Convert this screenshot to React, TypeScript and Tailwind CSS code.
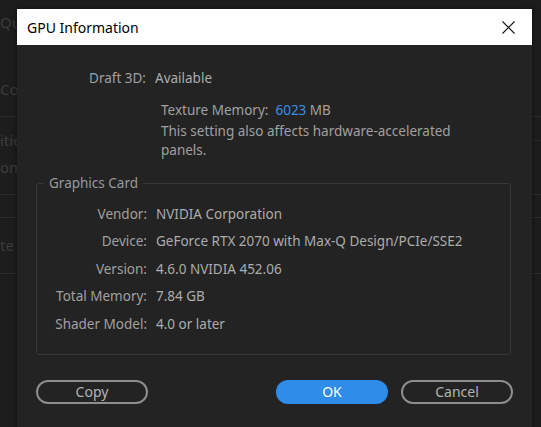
import React from 'react';

const font = { fontFamily: '"Noto Sans", "Liberation Sans", sans-serif' };

function InfoRow({ label, value }: { label: string; value: string }) {
  return (
    <div className="flex h-[27.5px] items-center">
      <span className="w-[110px] text-right text-[#a0a0a0]">{label}</span>
      <span className="ml-[9px] text-[#acacac]">{value}</span>
    </div>
  );
}

export default function App() {
  const card = [
    { label: 'Vendor:', value: 'NVIDIA Corporation' },
    { label: 'Device:', value: 'GeForce RTX 2070 with Max-Q Design/PCIe/SSE2' },
    { label: 'Version:', value: '4.6.0 NVIDIA 452.06' },
    { label: 'Total Memory:', value: '7.84 GB' },
    { label: 'Shader Model:', value: '4.0 or later' },
  ];

  return (
    <div className="relative h-[427px] w-[541px] overflow-hidden bg-[#1d1d1d]" style={font}>
      {/* app panels behind the dialog */}
      <div className="flex h-full flex-col text-[15px] text-[#3c3c3c]">
        <div className="h-[117px] border-b border-[#2c2c2c]">
          <div className="mt-[11px]">Qu</div>
          <div className="mt-[44px]">Colo</div>
        </div>
        <div className="h-[24px] border-b border-[#2a2a2a]" />
        <div className="h-[54px] border-b border-[#2c2c2c]">
          <div className="mt-[-12px]">ition</div>
          <div className="mt-[4px]">om</div>
        </div>
        <div className="h-[23px] border-b border-[#2c2c2c]" />
        <div className="h-[56px] border-b border-[#2c2c2c]">
          <div className="mt-[16px]">te A</div>
        </div>
        <div className="flex-1" />
      </div>

      {/* dialog window */}
      <div className="absolute left-[17px] top-[9px] flex h-[430px] w-[515px] flex-col bg-[#232323] shadow-[0_0_6px_rgba(0,0,0,0.5)]">
        <div className="flex h-9 items-center justify-between bg-white pl-[10px] pr-[17px]">
          <span className="text-[14px] text-black">GPU Information</span>
          <svg width="13" height="13" viewBox="0 0 13 13" fill="none" stroke="#111" strokeWidth="1.1">
            <path d="M0.5 0.5 L12.5 12.5 M12.5 0.5 L0.5 12.5" />
          </svg>
        </div>

        <div className="flex flex-col px-[19px] text-[13.5px]">
          <div className="mt-[23px] flex h-5 items-center">
            <span className="w-[110px] text-right text-[#a0a0a0]">Draft 3D:</span>
            <span className="ml-[9px] text-[#acacac]">Available</span>
          </div>
          <div className="ml-[125px] mt-[13px] leading-[19px] text-[#a0a0a0]">
            <div>
              Texture Memory:&nbsp;&nbsp;<span className="text-[#3d8ee0]">6023</span> MB
            </div>
            <div className="mt-[2px] w-[290px]">This setting also affects hardware-accelerated panels.</div>
          </div>

          <fieldset className="mr-[2px] mt-[13px] rounded-[3px] border border-[#383838] pb-[16px] pt-[7px]">
            <legend className="ml-[7px] px-[5px] leading-5 text-[#999999]">Graphics Card</legend>
            {card.map((row) => (
              <InfoRow key={row.label} {...row} />
            ))}
          </fieldset>

          <div className="mt-[25px] flex h-6 items-center">
            <button className="h-6 w-[112px] rounded-full border-2 border-[#8d8d8d] text-[14px] leading-none text-[#b3b3b3]">
              Copy
            </button>
            <div className="flex-1" />
            <button className="h-6 w-[112px] rounded-full bg-[#2f8ce8] text-[14px] leading-none text-white">
              OK
            </button>
            <button className="ml-[13px] h-6 w-[112px] rounded-full border-2 border-[#8d8d8d] text-[14px] leading-none text-[#b3b3b3]">
              Cancel
            </button>
          </div>
        </div>
      </div>
    </div>
  );
}
